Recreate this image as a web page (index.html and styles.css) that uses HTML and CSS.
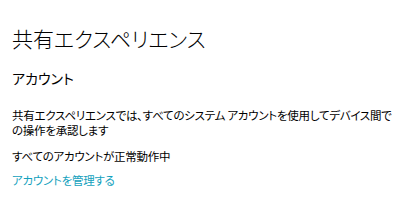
FILE: index.html
```html
<!DOCTYPE html>
<html lang="ja">
<head>
    <meta charset="UTF-8">
    <meta name="viewport" content="width=device-width, initial-scale=1.0">
    <title>共有エクスペリエンス</title>
    <link rel="stylesheet" href="styles.css">
</head>
<body>
    <div class="settings-page">
        <h1 class="page-title">共有エクスペリエンス</h1>

        <h2 class="section-title">アカウント</h2>

        <p class="description">共有エクスペリエンスでは、すべてのシステム アカウントを使用してデバイス間での操作を承認します</p>

        <p class="status">すべてのアカウントが正常動作中</p>

        <a href="#" class="manage-link">アカウントを管理する</a>
    </div>
</body>
</html>
```

FILE: styles.css
```css
body {
    margin: 0;
    padding: 0;
    font-family: 'Noto Sans CJK JP', 'Noto Sans', sans-serif;
    font-feature-settings: "palt";
    background-color: #fff;
    color: #000;
}

.settings-page {
    padding: 23px 4px 0 12px;
}

.page-title {
    font-size: 21px;
    font-weight: 300;
    line-height: 30px;
    margin: 0 0 15px;
}

.section-title {
    font-size: 14px;
    font-weight: 400;
    line-height: 20px;
    margin: 0 0 20px;
}

.description,
.status,
.manage-link {
    font-size: 11.5px;
    line-height: 15px;
    letter-spacing: -0.25px;
}

.description {
    margin: 0 0 11px;
}

.status {
    margin: 0 0 2px;
}

.manage-link {
    display: inline-block;
    color: #13a1bd;
    text-decoration: none;
}
```
